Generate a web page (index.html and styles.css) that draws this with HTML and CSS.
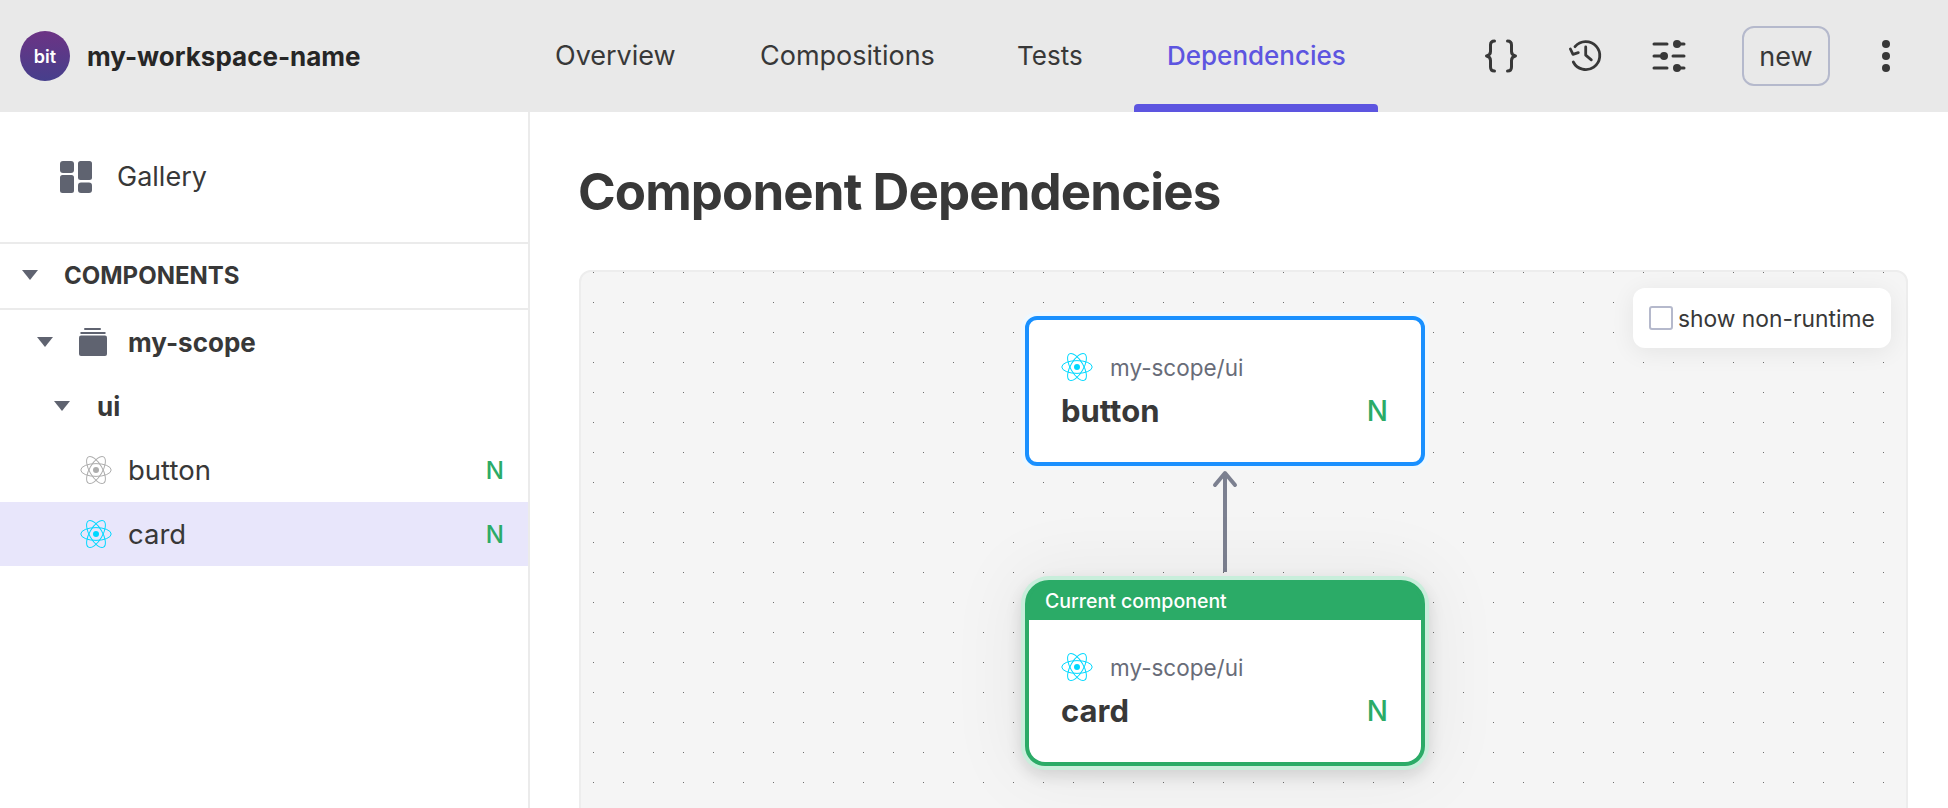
FILE: index.html
```html
<!DOCTYPE html>
<html lang="en">
<head>
<meta charset="utf-8">
<title>Component Dependencies</title>
<link rel="stylesheet" href="styles.css">
</head>
<body>
<svg class="defs" width="0" height="0" aria-hidden="true">
  <symbol id="atom" viewBox="0 0 32 32">
    <g fill="none" stroke="currentColor" stroke-width="1">
      <ellipse cx="16" cy="16" rx="15.2" ry="6.4"/>
      <ellipse cx="16" cy="16" rx="15.2" ry="6.4" transform="rotate(60 16 16)"/>
      <ellipse cx="16" cy="16" rx="15.2" ry="6.4" transform="rotate(120 16 16)"/>
    </g>
    <circle cx="16" cy="16" r="3" fill="currentColor"/>
  </symbol>
</svg>
<header class="topbar">
  <div class="brand">
    <span class="logo">bit</span>
    <span class="workspace">my-workspace-name</span>
  </div>
  <nav class="tabs">
    <a class="tab tab-overview">Overview</a>
    <a class="tab tab-compositions">Compositions</a>
    <a class="tab tab-tests">Tests</a>
    <a class="tab tab-active">Dependencies</a>
  </nav>
  <div class="actions">
    <svg class="icon-braces" width="34" height="34" viewBox="0 0 34 34" fill="none" stroke="#383838" stroke-width="3" stroke-linecap="round" stroke-linejoin="round"><path d="M10.5 2C7.5 2 6.5 3.3 6.5 6v6.5c0 2.5-1 3.8-4 4.5 3 .7 4 2 4 4.5V28c0 2.7 1 4 4 4"/><path d="M23.5 2c3 0 4 1.3 4 4v6.5c0 2.5 1 3.8 4 4.5-3 .7-4 2-4 4.500V28c0 2.7-1 4-4 4"/></svg>
    <svg class="icon-history" width="34" height="34" viewBox="0 0 34 34" fill="none" stroke="#383838" stroke-width="2.8" stroke-linecap="round" stroke-linejoin="round"><path d="M7 7.7A14 14 0 1 1 5.3 23"/><path d="M2.4 10l2.6 5.3 5.3-1.6"/><path d="M17.7 8v8.2l5.6 4.6"/></svg>
    <svg class="icon-sliders" width="34" height="34" viewBox="0 0 34 34" fill="none" stroke="#383838" stroke-width="3" stroke-linecap="round"><path d="M2 5h13M28 5h4M2 17h6M21 17h11M2 29h13M28 29h4"/><g fill="#383838" stroke="none"><circle cx="25" cy="5" r="4"/><circle cx="12" cy="17" r="4"/><circle cx="25" cy="29" r="4"/></g></svg>
    <span class="new-btn">new</span>
    <svg class="icon-more" width="10" height="34" viewBox="0 0 10 34" fill="#383838"><circle cx="5" cy="5" r="4"/><circle cx="5" cy="17" r="4"/><circle cx="5" cy="29" r="4"/></svg>
  </div>
</header>
<div class="body-row">
  <aside class="sidebar">
    <div class="gallery">
      <svg width="32" height="32" viewBox="0 0 32 32" fill="#5f6370"><rect x="0" y="0" width="14" height="12" rx="3"/><rect x="0" y="14" width="14" height="18" rx="2.5"/><rect x="18" y="0" width="14" height="19" rx="2.5"/><rect x="18" y="21.500" width="14" height="10.500" rx="3"/></svg>
      <span>Gallery</span>
    </div>
    <div class="section-head">
      <i class="caret"></i>
      <span>COMPONENTS</span>
    </div>
    <div class="row row-scope">
      <i class="caret"></i>
      <svg class="scope-icon" width="28" height="28" viewBox="0 0 28 28" fill="#5f6370"><rect x="5" y="0" width="17" height="2" rx="1"/><rect x="1.500" y="4" width="25" height="2"/><rect x="0" y="7.500" width="28" height="20.500" rx="2"/></svg>
      <span>my-scope</span>
    </div>
    <div class="row row-ui">
      <i class="caret"></i>
      <span>ui</span>
    </div>
    <div class="row row-item">
      <svg class="atom atom-grey"><use href="#atom"/></svg>
      <span class="item-name">button</span>
      <span class="status">N</span>
    </div>
    <div class="row row-item row-selected">
      <svg class="atom"><use href="#atom"/></svg>
      <span class="item-name">card</span>
      <span class="status">N</span>
    </div>
  </aside>
  <main class="content">
    <h1 class="title">Component Dependencies</h1>
    <section class="canvas">
      <label class="toggle">
        <span class="checkbox"></span>
        <span>show non-runtime</span>
      </label>
      <svg class="edge" width="40" height="110" viewBox="0 0 40 110" fill="none" stroke="#7c8090" stroke-width="4" stroke-linecap="round" stroke-linejoin="round"><path d="M20 3v99" stroke-linecap="butt"/><path d="M10 15L20 3l10 12"/></svg>
      <article class="node node-dep">
        <div class="node-body">
          <div class="node-path"><svg class="atom"><use href="#atom"/></svg><span>my-scope/ui</span></div>
          <div class="node-main"><span class="node-name">button</span><span class="node-status">N</span></div>
        </div>
      </article>
      <article class="node node-current">
        <div class="node-tag">Current component</div>
        <div class="node-body">
          <div class="node-path"><svg class="atom"><use href="#atom"/></svg><span>my-scope/ui</span></div>
          <div class="node-main"><span class="node-name">card</span><span class="node-status">N</span></div>
        </div>
      </article>
    </section>
  </main>
</div>
</body>
</html>
```
FILE: styles.css
```css
* { box-sizing: border-box; }
html, body { margin: 0; height: 100%; }
body {
  width: 1948px;
  height: 808px;
  overflow: hidden;
  display: flex;
  flex-direction: column;
  font-family: "Inter", "Noto Sans", sans-serif;
  color: #383838;
  background: #fff;
}
.defs { position: absolute; }

.topbar {
  flex: 0 0 112px;
  display: flex;
  align-items: center;
  background: #e9e9e9;
}
.brand {
  flex: 0 0 530px;
  display: flex;
  align-items: center;
  gap: 17px;
  padding-left: 20px;
}
.logo {
  width: 50px;
  height: 50px;
  border-radius: 50%;
  display: flex;
  align-items: center;
  justify-content: center;
  background: linear-gradient(180deg, #6c3384, #463f8c);
  color: #fff;
  font-size: 18px;
  font-weight: 600;
}
.workspace {
  font-size: 26px;
  font-weight: 700;
  color: #262626;
}

.tabs {
  display: flex;
  align-self: stretch;
}
.tab {
  display: flex;
  align-items: center;
  padding: 0 0 2px 25px;
  font-size: 27px;
}
.tab-overview { width: 205px; }
.tab-compositions { width: 258px; }
.tab-tests {
  width: 141px;
  padding-left: 24px;
  font-size: 26px;
}
.tab-active {
  position: relative;
  width: 244px;
  padding-left: 33px;
  color: #5d55e0;
  font-size: 26px;
  font-weight: 500;
}
.tab-active::after {
  content: "";
  position: absolute;
  left: 0;
  right: 0;
  bottom: 0;
  height: 8px;
  border-radius: 4px 4px 0 0;
  background: #5d55e0;
}

.actions {
  margin-left: auto;
  display: flex;
  align-items: center;
  padding-right: 57px;
}
.icon-braces { margin-right: 50px; }
.icon-history { margin-right: 50px; }
.icon-sliders { margin-right: 56px; }
.new-btn {
  width: 88px;
  height: 60px;
  margin-right: 51px;
  display: flex;
  align-items: center;
  justify-content: center;
  border: 2px solid #b5b9cc;
  border-radius: 12px;
  font-size: 27px;
}

.body-row {
  flex: 1;
  min-height: 0;
  display: flex;
}
.sidebar {
  flex: 0 0 530px;
  border-right: 2px solid #ebebeb;
}
.gallery {
  height: 132px;
  display: flex;
  align-items: center;
  gap: 25px;
  padding: 0 0 1px 60px;
  border-bottom: 2px solid #ebebeb;
  font-size: 27px;
}
.caret {
  width: 0;
  height: 0;
  flex: none;
  border-left: 8.500px solid transparent;
  border-right: 8.500px solid transparent;
  border-top: 10px solid #5f6370;
}
.section-head {
  height: 66px;
  display: flex;
  align-items: center;
  gap: 26px;
  padding: 0 0 2px 22px;
  border-bottom: 2px solid #ebebeb;
  font-size: 24px;
  font-weight: 700;
}
.row {
  height: 64px;
  display: flex;
  align-items: center;
  font-size: 26px;
}
.row-scope {
  padding-left: 37px;
  font-weight: 700;
}
.scope-icon { margin: 0 21px 0 26px; }
.row-ui {
  padding-left: 54px;
  gap: 27px;
  font-weight: 700;
}
.row-item {
  padding: 0 24px 0 80px;
  gap: 16px;
  font-size: 27.500px;
}
.row-selected { background: #e8e6fb; }
.item-name { flex: 1; }
.status {
  color: #2bab67;
  font-size: 24px;
  font-weight: 500;
}
.atom {
  width: 32px;
  height: 32px;
  flex: none;
  color: #00d8ff;
}
.atom-grey { color: #adadad; }

.content {
  flex: 1;
  min-width: 0;
  padding: 0 40px 0 49px;
  overflow: hidden;
}
.title {
  margin: 0 0 0 -1px;
  height: 158px;
  padding-top: 49px;
  font-size: 51px;
  line-height: 62px;
  letter-spacing: -0.900px;
  font-weight: 700;
}
.canvas {
  position: relative;
  height: 600px;
  border: 2px solid #ededed;
  border-radius: 12px;
  background-color: #f5f5f5;
  background-image: radial-gradient(circle at 0.500px 0.500px, #6f6f6f 0.700px, transparent 1px);
  background-size: 30px 30px;
  background-position: 12px 0;
}
.toggle {
  position: absolute;
  top: 16px;
  right: 15px;
  width: 258px;
  height: 60px;
  display: flex;
  align-items: center;
  gap: 5px;
  padding-left: 16px;
  border-radius: 12px;
  background: #fff;
  box-shadow: 0 4px 24px rgba(0, 0, 0, 0.07);
  font-size: 22.800px;
}
.checkbox {
  width: 24px;
  height: 24px;
  flex: none;
  border: 2px solid #b5b9cc;
  border-radius: 3px;
}
.edge {
  position: absolute;
  left: 624px;
  top: 198px;
}
.node {
  position: absolute;
  left: 444px;
  width: 400px;
}
.node-dep {
  top: 44px;
  height: 150px;
  border: 4px solid #1890ff;
  border-radius: 12px;
  background: #fff;
  box-shadow: 0 0 0 4px #eef8ff;
}
.node-current {
  top: 308px;
  height: 186px;
  display: flex;
  flex-direction: column;
  border: 4px solid #2bab67;
  border-radius: 24px 24px 20px 20px;
  background: #2bab67;
  box-shadow: 0 0 0 4px #c8eedb, 0 6px 16px 4px rgba(0, 0, 0, 0.12), 0 0 70px 14px rgba(0, 0, 0, 0.05);
}
.node-tag {
  height: 36px;
  flex: none;
  padding: 0 0 3px 16px;
  display: flex;
  align-items: center;
  color: #fff;
  font-size: 19.500px;
  font-weight: 500;
}
.node-body {
  padding: 32px 33px 0 32px;
}
.node-current .node-body {
  flex: 1;
  border-radius: 0 0 16px 16px;
  background: #fff;
}
.node-path {
  display: flex;
  align-items: center;
  gap: 17px;
  height: 30px;
  color: #686c78;
  font-size: 22.500px;
}
.node-main {
  display: flex;
  align-items: center;
  justify-content: space-between;
  margin-top: 12px;
  height: 34px;
}
.node-name {
  padding-bottom: 2px;
  font-size: 31px;
  font-weight: 700;
}
.node-status {
  color: #2bab67;
  font-size: 28px;
  font-weight: 500;
}
```
